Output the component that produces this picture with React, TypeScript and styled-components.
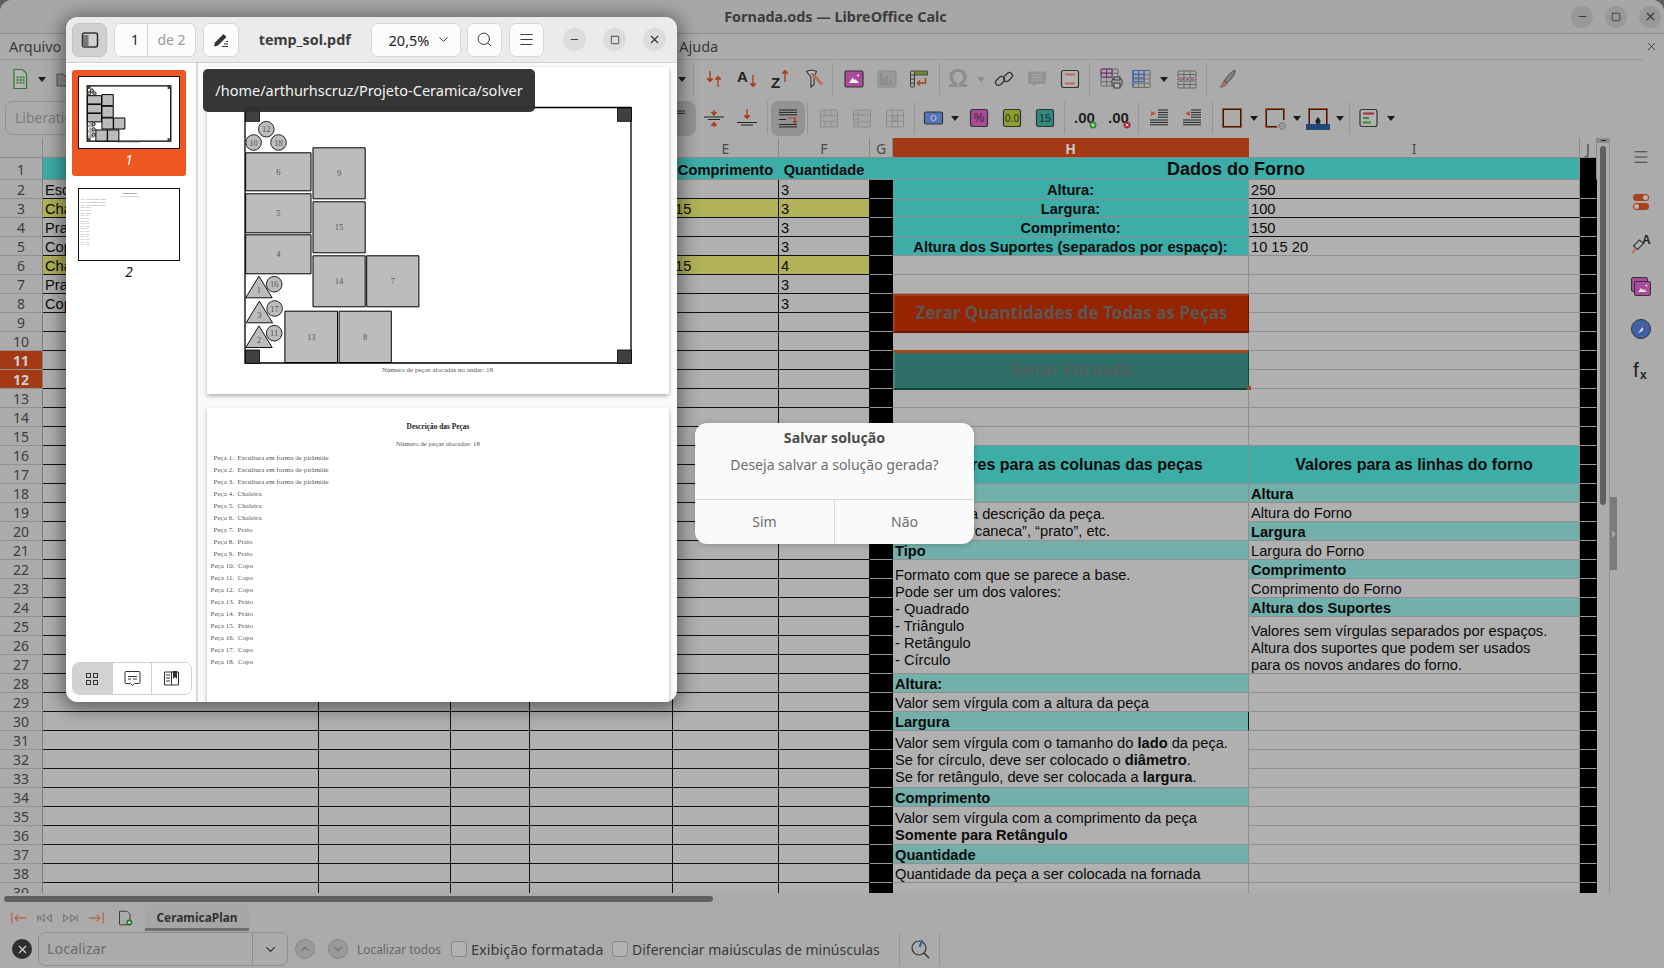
import React, { Fragment, ReactNode } from 'react';
import styled, { createGlobalStyle } from 'styled-components';
import { ChevronDown, ChevronUp, Menu, Minus, Search, Square, X } from 'lucide-react';

const UI_FONT = `'Noto Sans', 'Open Sans', sans-serif`;
const SHEET_FONT = `'Liberation Sans', Arial, sans-serif`;
const PDF_FONT = `'Liberation Serif', 'Times New Roman', serif`;

const GlobalStyle = createGlobalStyle`
  html, body { margin: 0; padding: 0; background: #5e5e5e; }
  * { box-sizing: border-box; }
  #root { width: 1664px; height: 968px; overflow: hidden; }
`;

const RED = '#a8401c';
const INK = '#333';
const OFF = '#8d8d8d';

/* ---------- main calc window ---------- */

const Screen = styled.div`
  position: relative;
  width: 1664px;
  height: 968px;
  overflow: hidden;
  background: #ababab;
  border-radius: 12px 12px 0 0;
  display: flex;
  flex-direction: column;
  font-family: ${UI_FONT};
  color: #3a3a3a;
`;

const TitleBar = styled.div`
  height: 34px;
  flex: none;
  background: #a7a7a7;
  border-bottom: 1px solid #8a8a8a;
  display: flex;
  align-items: center;
  padding: 0 3px 0 0;
`;

const TitleText = styled.div`
  flex: 1;
  padding-left: 100px;
  text-align: center;
  font-size: 14.4px;
  font-weight: 700;
  color: #3c3c3c;
`;

const CalcControls = styled.div`
  display: flex;
  gap: 12px;
`;

const RoundControl = styled.div<{ $size?: number; $tint?: string }>`
  width: ${p => p.$size ?? 22}px;
  height: ${p => p.$size ?? 22}px;
  border-radius: 50%;
  background: ${p => p.$tint ?? '#989898'};
  display: flex;
  align-items: center;
  justify-content: center;
  color: #333;
`;

const MenuBar = styled.div`
  height: 26px;
  flex: none;
  margin-right: 21px;
  border-bottom: 1px solid #969696;
  display: flex;
  align-items: center;
  padding-left: 9px;
  font-size: 14.4px;
  color: #3a3a3a;
`;

const MenuSpacer = styled.div`
  width: 618px;
`;

const MenuGrow = styled.div`
  flex: 1;
`;

const MenuClose = styled.div`
  margin-right: -15px;
  display: flex;
  color: #333;
`;

const ToolbarRow = styled.div<{ $h: number }>`
  height: ${p => p.$h}px;
  flex: none;
  display: flex;
  align-items: center;
`;

const Tool = styled.div<{ $w: number; $gap: number; $active?: boolean }>`
  width: ${p => p.$w}px;
  height: ${p => (p.$active ? 35 : 24)}px;
  margin-left: ${p => p.$gap}px;
  flex: none;
  display: flex;
  align-items: center;
  justify-content: center;
  border-radius: 8px;
  background: ${p => (p.$active ? '#939393' : 'transparent')};
`;

const Separator = styled.div<{ $gap: number }>`
  width: 1px;
  height: 32px;
  margin-left: ${p => p.$gap}px;
  flex: none;
  background: #959595;
`;

const DropMark = styled.div<{ $gap: number; $off?: boolean }>`
  width: 0;
  height: 0;
  margin-left: ${p => p.$gap}px;
  flex: none;
  border-left: 4.5px solid transparent;
  border-right: 4.5px solid transparent;
  border-top: 5px solid ${p => (p.$off ? OFF : '#1c1c1c')};
`;

const FontBox = styled.div`
  width: 210px;
  height: 34px;
  margin-left: 5px;
  flex: none;
  border: 1px solid #929292;
  border-radius: 7px;
  padding: 0 0 1px 9px;
  display: flex;
  align-items: center;
  font-size: 14px;
  color: #7c7c7c;
`;

const Icon = styled.svg.attrs({ viewBox: '0 0 20 20', fill: 'none' })`
  width: 20px;
  height: 20px;
  display: block;
  overflow: visible;
`;

const SheetArea = styled.div`
  flex: 1;
  min-height: 0;
  display: flex;
`;

const GridClip = styled.div`
  width: 1597px;
  flex: none;
  overflow: hidden;
`;

const SheetGrid = styled.div`
  display: grid;
  grid-template-columns: 43px 276px 132px 79px 143px 106px 91px 23px 356px 331px 17px;
  grid-template-rows: 20px 22px repeat(38, 19px);
  font-family: ${SHEET_FONT};
  font-size: 14.67px;
  color: #0b0b0b;
`;

const ColHead = styled.div<{ $on?: boolean }>`
  background: ${p => (p.$on ? '#a33a15' : '#ababab')};
  border-right: 1px solid ${p => (p.$on ? '#a33a15' : '#8a8a8a')};
  border-bottom: 1px solid #8a8a8a;
  padding-top: 2px;
  color: ${p => (p.$on ? '#c8c8c8' : '#4e4a46')};
  font-family: ${UI_FONT};
  font-size: 14px;
  font-weight: ${p => (p.$on ? 700 : 400)};
  display: flex;
  align-items: center;
  justify-content: center;
`;

const RowHead = styled.div<{ $on?: boolean }>`
  background: ${p => (p.$on ? '#a33a15' : '#ababab')};
  border-right: 1px solid #7d7d7d;
  border-bottom: 1px solid #919191;
  padding-top: 1px;
  color: ${p => (p.$on ? '#d0d0d0' : '#3d3d3d')};
  font-family: ${UI_FONT};
  font-size: 14px;
  font-weight: ${p => (p.$on ? 700 : 400)};
  display: flex;
  align-items: center;
  justify-content: center;
`;

type Tone = 'plain' | 'head' | 'sub' | 'yellow' | 'black';

const TONES: Record<Tone, string> = {
  plain: '#b0b0b0',
  head: '#3dada8',
  sub: '#73b0ab',
  yellow: '#b2b25a',
  black: '#000',
};

const Cell = styled.div<{
  $tone?: Tone;
  $span?: number;
  $cols?: number;
  $center?: boolean;
  $bold?: boolean;
  $size?: number;
  $bottom?: string;
  $right?: string;
  $end?: boolean;
  $top?: number;
}>`
  background: ${p => TONES[p.$tone ?? 'plain']};
  grid-row: span ${p => p.$span ?? 1};
  grid-column: span ${p => p.$cols ?? 1};
  border-bottom: 1px solid ${p => p.$bottom ?? '#8f8f8f'};
  border-right: 1px solid ${p => p.$right ?? '#8f8f8f'};
  padding: ${p => p.$top ?? 3}px 2px 0;
  font-weight: ${p => (p.$bold ? 700 : 400)};
  font-size: ${p => p.$size ?? 14.67}px;
  line-height: 17px;
  text-align: ${p => (p.$center ? 'center' : 'left')};
  display: flex;
  flex-direction: column;
  justify-content: ${p => (p.$end ? 'flex-end' : 'center')};
  white-space: nowrap;
  overflow: hidden;
`;

const SheetButton = styled.div<{ $kind: 'red' | 'teal' }>`
  grid-row: span 2;
  background: ${p => (p.$kind === 'red' ? '#962400' : '#2e7068')};
  border-style: solid;
  border-width: ${p => (p.$kind === 'red' ? '2px 1px 2px 2px' : '3px 1px 2px 2px')};
  border-color: ${p => (p.$kind === 'red'
    ? '#a33a18 #6c1200 #6c1200 #a33a18'
    : '#a8451c #0f453f #0f453f #3e8a80')};
  color: ${p => (p.$kind === 'red' ? '#5d5654' : '#50605f')};
  margin: ${p => (p.$kind === 'red' ? '0 0 -1px' : '-1px 0')};
  padding-bottom: 2px;
  font-family: ${UI_FONT};
  font-size: 17px;
  font-weight: 700;
  display: flex;
  align-items: center;
  justify-content: center;
  position: relative;
`;

const FillHandle = styled.span`
  position: absolute;
  right: -3px;
  bottom: -2px;
  width: 4px;
  height: 4px;
  background: #a8451c;
`;

const VScroll = styled.div`
  width: 12px;
  flex: none;
  display: flex;
  flex-direction: column;
  align-items: center;
`;

const VScrollCap = styled.div`
  width: 12px;
  height: 5px;
  background: #8c8c8c;
  display: flex;
  align-items: center;
  justify-content: center;
  &::after {
    content: '';
    width: 5px;
    height: 1px;
    background: #222;
  }
`;

const VScrollThumb = styled.div`
  width: 6px;
  height: 359px;
  margin-top: 3px;
  border-radius: 3px;
  background: #606060;
`;

const Deck = styled.div`
  flex: 1;
  display: flex;
  border-left: 1px solid #909090;
`;

const DeckGrip = styled.div`
  width: 7px;
  flex: none;
  height: 73px;
  margin-top: 359px;
  background: #7b7b7b;
  display: flex;
  align-items: center;
  justify-content: center;
  &::after {
    content: '';
    border-left: 4px solid #a6a6a6;
    border-top: 4px solid transparent;
    border-bottom: 4px solid transparent;
  }
`;

const DeckIcons = styled.div`
  flex: 1;
  display: flex;
  flex-direction: column;
  align-items: center;
  padding-top: 10px;
  gap: 22.4px;
`;

const DeckMenu = styled(Menu)`
  margin-bottom: 3.5px;
`;

const HScrollRow = styled.div`
  height: 12px;
  flex: none;
  padding: 3px 0 3px 4px;
`;

const HScrollThumb = styled.div`
  width: 709px;
  height: 6px;
  border-radius: 3px;
  background: #606060;
`;

const TabsRow = styled.div`
  height: 26px;
  flex: none;
  display: flex;
  align-items: center;
  gap: 9.5px;
  padding-left: 11px;
`;

const AddSheet = styled.div`
  margin-left: 5px;
  display: flex;
`;

const SheetTab = styled.div`
  width: 104px;
  height: 26px;
  margin-left: 2.5px;
  background: #a6a6a6;
  border-bottom: 3px solid #707070;
  display: flex;
  align-items: center;
  justify-content: center;
  font-size: 11.9px;
  font-weight: 700;
  color: #333;
`;

const FindBar = styled.div`
  height: 37px;
  flex: none;
  display: flex;
  align-items: center;
  padding: 0 0 1px 12px;
`;

const FindClose = styled(RoundControl)`
  color: #d8d8d8;
  margin-right: 6px;
`;

const FindInput = styled.div`
  width: 250px;
  height: 34px;
  border: 1px solid #8f8f8f;
  border-radius: 7px;
  display: flex;
  align-items: center;
`;

const FindText = styled.div`
  flex: 1;
  padding: 0 0 1px 8px;
  font-size: 14.4px;
  color: #6c6c6c;
`;

const FindDrop = styled.div`
  width: 35px;
  height: 100%;
  border-left: 1px solid #8f8f8f;
  display: flex;
  align-items: center;
  justify-content: center;
  color: #333;
`;

const FindArrow = styled.div<{ $gap: number }>`
  width: 20px;
  height: 20px;
  margin-left: ${p => p.$gap}px;
  border-radius: 50%;
  background: #9a9a9a;
  border: 1px solid #868686;
  display: flex;
  align-items: center;
  justify-content: center;
  color: #777;
`;

const FindAll = styled.div`
  margin-left: 9px;
  width: 84px;
  font-size: 11.9px;
  color: #666;
  white-space: nowrap;
`;

const CheckLabel = styled.div<{ $gap: number; $w: number; $size: number }>`
  margin-left: ${p => p.$gap}px;
  width: ${p => p.$w}px;
  flex: none;
  display: flex;
  align-items: center;
  gap: 4px;
  font-size: ${p => p.$size}px;
  color: #3a3a3a;
  white-space: nowrap;
`;

const CheckBox = styled.span`
  width: 16px;
  height: 16px;
  flex: none;
  border: 1px solid #8a8a8a;
  border-radius: 3px;
  background: #b2b2b2;
`;

const FindEnd = styled.div`
  width: 41px;
  height: 34px;
  margin-left: 9px;
  border-left: 1px solid #969696;
  border-right: 1px solid #969696;
  display: flex;
  align-items: center;
  justify-content: center;
`;

/* ---------- document viewer window ---------- */

const PdfWindow = styled.div`
  position: absolute;
  left: 66px;
  top: 17px;
  width: 611px;
  height: 685px;
  border-radius: 12px;
  overflow: hidden;
  background: #fafafa;
  box-shadow: 0 3px 18px 4px rgba(0, 0, 0, 0.45);
  display: flex;
  flex-direction: column;
  color: #2e2e2e;
`;

const PdfHeader = styled.div`
  height: 46px;
  flex: none;
  background: #ebebeb;
  border-bottom: 1px solid #d0d0d0;
  display: flex;
  align-items: center;
  padding: 0 11px 0 6px;
  gap: 7px;
`;

const HeadButton = styled.div<{ $w?: number; $on?: boolean }>`
  width: ${p => p.$w ?? 35}px;
  height: 34px;
  flex: none;
  border: 1px solid ${p => (p.$on ? '#c4c4c4' : '#d6d6d6')};
  border-radius: 7px;
  background: ${p => (p.$on ? '#d0d0d0' : '#fcfcfc')};
  display: flex;
  align-items: center;
  justify-content: center;
  color: #3a3a3a;
`;

const PageBox = styled.div`
  width: 82px;
  height: 34px;
  flex: none;
  border: 1px solid #d6d6d6;
  border-radius: 7px;
  background: #fcfcfc;
  display: flex;
  align-items: center;
  font-size: 14px;
`;

const PageCurrent = styled.div`
  width: 33px;
  height: 100%;
  padding-right: 8px;
  border-right: 1px solid #d6d6d6;
  display: flex;
  align-items: center;
  justify-content: flex-end;
  color: #222;
`;

const PageTotal = styled.div`
  flex: 1;
  text-align: center;
  color: #999;
`;

const PdfTitle = styled.div`
  flex: 1;
  text-align: center;
  font-size: 14.4px;
  font-weight: 700;
  color: #3d3d3d;
`;

const ZoomBox = styled(HeadButton)`
  padding-left: 9px;
  gap: 7px;
  font-size: 14.5px;
  color: #222;
  margin-right: -0.5px;
`;

const WindowControls = styled.div`
  margin-left: 12px;
  display: flex;
  gap: 17px;
`;

const PdfBody = styled.div`
  flex: 1;
  min-height: 0;
  display: flex;
`;

const Thumbs = styled.div`
  width: 132px;
  flex: none;
  background: #fff;
  border-right: 2px solid #dadada;
  padding: 7px 6px;
  display: flex;
  flex-direction: column;
`;

const ThumbCard = styled.div<{ $on?: boolean }>`
  width: 114px;
  height: 106px;
  flex: none;
  padding-top: 6px;
  margin-bottom: 6px;
  border-radius: 3px;
  background: ${p => (p.$on ? '#ed5722' : 'transparent')};
  display: flex;
  flex-direction: column;
  align-items: center;
`;

const ThumbFrame = styled.div`
  width: 102px;
  height: 73px;
  flex: none;
  background: #fff;
  border: 1px solid #111;
  overflow: hidden;
`;

const ThumbLabel = styled.div<{ $on?: boolean }>`
  margin-top: 2px;
  font-size: 13.5px;
  font-style: italic;
  color: ${p => (p.$on ? '#fff' : '#111')};
`;

const ThumbScale = styled.div`
  width: 462px;
  transform: scale(0.22);
  transform-origin: 0 0;
`;

const ModeSwitch = styled.div`
  margin-top: auto;
  width: 120px;
  height: 33px;
  flex: none;
  border: 1px solid #cfcfcf;
  border-radius: 7px;
  overflow: hidden;
  display: flex;
`;

const ModeItem = styled.div<{ $on?: boolean }>`
  flex: 1;
  background: ${p => (p.$on ? '#d2d2d2' : '#fff')};
  border-right: 1px solid #cfcfcf;
  display: flex;
  align-items: center;
  justify-content: center;
  color: #3a3a3a;
  &:last-child { border-right: 0; }
`;

const PageColumn = styled.div`
  flex: 1;
  min-width: 0;
  padding: 4px 0 0 9px;
  display: flex;
  flex-direction: column;
  gap: 14px;
  overflow: hidden;
`;

const PageSheet = styled.div<{ $h: number }>`
  width: 462px;
  height: ${p => p.$h}px;
  flex: none;
  background: #fff;
  box-shadow: 0 2px 4px rgba(0, 0, 0, 0.3);
`;

const PageDrawing = styled.svg.attrs({ viewBox: '207.5 66.5 462 327' })`
  width: 100%;
  height: 100%;
  display: block;
`;

const DocText = styled.div`
  padding-top: 14px;
  font-family: ${PDF_FONT};
  font-size: 6.9px;
  color: #555;
  display: flex;
  flex-direction: column;
`;

const DocTitle = styled.div`
  height: 18px;
  text-align: center;
  font-size: 7.4px;
  font-weight: 700;
  color: #222;
`;

const DocCount = styled.div`
  height: 12px;
  text-align: center;
`;

const DocLine = styled.div<{ $indent: number }>`
  height: 12px;
  line-height: 12px;
  padding-left: ${p => p.$indent}px;
  letter-spacing: 0.08px;
  white-space: pre;
`;

const PathTip = styled.div`
  position: absolute;
  left: 203px;
  top: 69px;
  width: 332px;
  height: 43px;
  padding-bottom: 1px;
  border-radius: 5px;
  background: rgba(48, 48, 48, 0.97);
  color: #f2f2f2;
  font-size: 14.5px;
  display: flex;
  align-items: center;
  justify-content: center;
`;

const SaveDialog = styled.div`
  position: absolute;
  left: 695px;
  top: 423px;
  width: 279px;
  height: 121px;
  border-radius: 12px;
  overflow: hidden;
  background: #fafafa;
  display: flex;
  flex-direction: column;
  box-shadow: 0 1px 6px rgba(0, 0, 0, 0.2);
`;

const DialogText = styled.div`
  height: 76px;
  flex: none;
  display: flex;
  flex-direction: column;
  align-items: center;
  padding-top: 4px;
`;

const DialogTitle = styled.div`
  font-size: 14.2px;
  font-weight: 700;
  color: #4b4b4b;
  line-height: 22px;
`;

const DialogBody = styled.div`
  margin-top: 5px;
  font-size: 14px;
  color: #6e6e6e;
  line-height: 22px;
`;

const DialogActions = styled.div`
  flex: 1;
  display: flex;
  border-top: 1px solid #d8d8d8;
`;

const DialogAction = styled.div<{ $w: number }>`
  width: ${p => p.$w}px;
  padding-bottom: 2px;
  border-right: 1px solid #d8d8d8;
  display: flex;
  align-items: center;
  justify-content: center;
  font-size: 14px;
  color: #6e6e6e;
  &:last-child { border-right: 0; }
`;

/* ---------- icons ---------- */

const ArrowV = ({ x, from, to, color = RED }: { x: number; from: number; to: number; color?: string }) => {
  const d = to > from ? -1 : 1;
  return (
    <>
      <path d={`M${x} ${from}V${to}`} stroke={color} strokeWidth="1.4" />
      <path d={`M${x - 2.8} ${to + d * 3.2}L${x} ${to}L${x + 2.8} ${to + d * 3.2}z`} fill={color} stroke={color} />
    </>
  );
};

const TableLines = ({ x, y, w, h, color, cols = 2, rows = 3 }: { x: number; y: number; w: number; h: number; color: string; cols?: number; rows?: number }) => (
  <g stroke={color} strokeWidth="1">
    <rect x={x} y={y} width={w} height={h} rx="1" />
    {Array.from({ length: cols - 1 }, (_, i) => (
      <path key={`c${i}`} d={`M${x + ((i + 1) * w) / cols} ${y}v${h}`} />
    ))}
    {Array.from({ length: rows - 1 }, (_, i) => (
      <path key={`r${i}`} d={`M${x} ${y + ((i + 1) * h) / rows}h${w}`} />
    ))}
  </g>
);

const Badge = ({ fill, label, size = 10 }: { fill: string; label: string; size?: number }) => (
  <Icon>
    <rect x="1.5" y="1.5" width="17" height="17" rx="2" fill={fill} stroke={INK} strokeWidth="1.2" />
    <text x="10" y="14" textAnchor="middle" fontSize={size} fontFamily={SHEET_FONT} fill="#2a2a2a">{label}</text>
  </Icon>
);

const TextRule = ({ y, x = 3, w = 14, n = 1 }: { y: number; x?: number; w?: number; n?: number }) => (
  <g stroke="#222" strokeWidth="1">
    {Array.from({ length: n }, (_, i) => (
      <path key={i} d={`M${x} ${y + i * 2.4}h${w}`} />
    ))}
  </g>
);

const icons: Record<string, ReactNode> = {
  calc: (
    <Icon>
      <path d="M4 .5h8.5l4 4v15H4z" stroke="#2d7a2a" strokeWidth="1.2" fill="#b4b4b4" />
      <rect x="6" y="7" width="9" height="8" fill="#2d7a2a" />
      <TableLines x={6} y={7} w={9} h={8} color="#b4b4b4" cols={3} rows={3} />
    </Icon>
  ),
  folder: (
    <Icon>
      <path d="M2 5h6l2 2h8v10H2z" stroke="#555" fill="#8e8e8e" />
    </Icon>
  ),
  sort: (
    <Icon>
      <ArrowV x={6} from={2} to={13} />
      <ArrowV x={14} from={18} to={7} />
    </Icon>
  ),
  sortUp: (
    <Icon>
      <text x="0" y="13" fontSize="15" fontWeight="700" fontFamily={SHEET_FONT} fill="#222">A</text>
      <ArrowV x={16} from={6} to={18} />
    </Icon>
  ),
  sortDown: (
    <Icon>
      <text x="1" y="19" fontSize="15" fontWeight="700" fontFamily={SHEET_FONT} fill="#222">Z</text>
      <ArrowV x={15} from={13} to={1} />
    </Icon>
  ),
  filter: (
    <Icon>
      <path d="M1.5 2.5c3-1.500 7-1.500 10 0l-2.500 5v8l-3 2.500V8z" stroke={INK} strokeWidth="1.100" fill="#b8b8b8" />
      <path d="M8 5.500l9 10" stroke="#c07058" strokeWidth="3" />
      <path d="M6.500 4.500l2 1.500" stroke={INK} />
    </Icon>
  ),
  image: (
    <Icon>
      <rect x="1" y="2" width="18" height="16" rx="1.500" fill="#a94a9a" stroke={INK} strokeWidth="1.200" />
      <path d="M5 14l3.500-5.500 2 2.500 1-1 3.500 4z" fill="#eee" />
      <circle cx="14" cy="6.500" r="1.100" fill="#eee" />
    </Icon>
  ),
  chart: (
    <Icon>
      <rect x="1" y="2" width="18" height="16" rx="1.500" fill="#9a9a9a" stroke="#8a8a8a" />
      <path d="M4 4v11h12M7 14V9M10 14V7M13 14v-4" stroke="#858585" strokeWidth="1.400" />
    </Icon>
  ),
  pivot: (
    <Icon>
      <TableLines x={1.500} y={2} w={4} h={16} color="#3a3a3a" cols={1} rows={4} />
      <rect x="5.500" y="2" width="13" height="4" fill="#6d8f2e" stroke="#3a3a3a" strokeWidth="0.800" />
      <path d="M16.500 9v5h-8M11 11.500l-2.600 2.500 2.600 2.500" stroke={RED} strokeWidth="1.400" />
    </Icon>
  ),
  omega: (
    <Icon>
      <text x="10" y="18" textAnchor="middle" fontSize="25" fontWeight="700" fontFamily={SHEET_FONT} fill={OFF}>Ω</text>
    </Icon>
  ),
  link: (
    <Icon>
      <g stroke={INK} strokeWidth="1.200">
        <rect x="1" y="9" width="10" height="6" rx="3" transform="rotate(-45 6 12)" />
        <rect x="9" y="5" width="10" height="6" rx="3" transform="rotate(-45 14 8)" />
      </g>
    </Icon>
  ),
  comment: (
    <Icon>
      <path d="M2 2.500h16a1 1 0 011 1V14a1 1 0 01-1 1H9l-3 3v-3H2a1 1 0 01-1-1V3.500a1 1 0 011-1z" fill="#939393" />
      <path d="M5 6h10M5 8.500h10M5 11h10" stroke="#a9a9a9" />
    </Icon>
  ),
  headers: (
    <Icon>
      <rect x="1.500" y="1.500" width="17" height="17" rx="2" fill="#b2b2b2" stroke={INK} strokeWidth="1.200" />
      <path d="M5 5.500h10M5 14.500h10" stroke="#c5694a" strokeWidth="2" />
    </Icon>
  ),
  protect: (
    <Icon>
      <TableLines x={0} y={0} w={17} h={17} color="#6b6b6b" cols={3} rows={4} />
      <TableLines x={0} y={0} w={11} h={8} color="#7a2a78" cols={2} rows={2} />
      <rect x="11" y="10" width="10" height="7" rx="1.500" fill="#aaa" stroke={INK} />
      <rect x="13" y="8" width="6" height="3" fill="#aaa" stroke={INK} />
      <rect x="13" y="14" width="6" height="5" fill="#b6b6b6" stroke={INK} />
    </Icon>
  ),
  table: (
    <Icon>
      <rect x="1" y="1.500" width="17" height="17" fill="#a7a7a7" />
      <TableLines x={1} y={1.500} w={17} h={17} color="#6e6e6e" cols={3} rows={4} />
      <TableLines x={1} y={1.500} w={11} h={11} color="#3c64b5" cols={2} rows={3} />
      <path d="M1 18.500V1.500h17" stroke="#3c64b5" strokeWidth="1.200" />
    </Icon>
  ),
  rowBreak: (
    <Icon>
      <TableLines x={1} y={2} w={18} h={7} color="#666" cols={3} rows={2} />
      <TableLines x={1} y={12} w={18} h={7} color="#666" cols={3} rows={2} />
      <path d="M0 10.500h20" stroke="#a8498f" strokeDasharray="3 1.500" />
    </Icon>
  ),
  brush: (
    <Icon>
      <path d="M6 12c3-5 7-9 11-11 1 3-3 9-8 13z" fill="#808080" stroke="#444" strokeWidth="0.800" />
      <path d="M6 12l3 2c-1 3-4 4-7 4 2-1 2-4 4-6z" fill="#c07058" stroke="#444" strokeWidth="0.600" />
    </Icon>
  ),
  alignTop: (
    <Icon>
      <TextRule y={3} n={2} x={0} w={16} />
      <ArrowV x={4} from={19} to={8} />
    </Icon>
  ),
  alignMiddle: (
    <Icon>
      <ArrowV x={10} from={2} to={7.500} />
      <TextRule y={9} x={0} w={20} />
      <TextRule y={11.500} x={4} w={12} />
      <ArrowV x={10} from={19} to={14} />
    </Icon>
  ),
  alignBottom: (
    <Icon>
      <ArrowV x={10} from={1} to={11} />
      <TextRule y={14.500} x={0} w={20} />
      <TextRule y={17} x={4} w={12} />
    </Icon>
  ),
  wrap: (
    <Icon>
      <TextRule y={2} n={3} x={1} w={18} />
      <path d="M10 10h7v4" stroke={RED} strokeWidth="1.200" />
      <path d="M14.500 13h5L17 16z" fill={RED} />
      <TextRule y={11.500} x={1} w={7} />
      <TextRule y={16.500} n={2} x={1} w={18} />
    </Icon>
  ),
  merge: (
    <Icon>
      <rect x="1.500" y="2" width="17" height="17" rx="1" fill="#a6a6a6" />
      <TableLines x={1.500} y={2} w={17} h={17} color={OFF} cols={1} rows={3} />
      <path d="M6 2v5M6 13v6M12 2v5M12 13v6" stroke={OFF} />
    </Icon>
  ),
  mergeSplit: (
    <Icon>
      <rect x="1.500" y="2" width="17" height="17" rx="1" fill="#a6a6a6" />
      <TableLines x={1.500} y={2} w={17} h={17} color={OFF} cols={1} rows={1} />
      <path d="M6 2v17M1.500 6.500h4.500M1.500 11h4.500M1.500 15h4.500M6 7h12.500M6 14h12.500" stroke={OFF} />
    </Icon>
  ),
  mergeCenter: (
    <Icon>
      <TableLines x={1.500} y={2} w={17} h={17} color={OFF} cols={3} rows={3} />
      <rect x="7.500" y="8" width="5" height="5" fill="#a3a3a3" stroke={OFF} />
    </Icon>
  ),
  currency: (
    <Icon>
      <rect x="0.500" y="4" width="18" height="12" rx="1.500" fill="#5674b8" stroke={INK} strokeWidth="1.200" />
      <circle cx="9.500" cy="10" r="2.600" stroke="#b9c6e3" />
    </Icon>
  ),
  percent: <Badge fill="#a94a9a" label="%" size={12} />,
  number: <Badge fill="#8aa02e" label="0.0" size={10} />,
  date: <Badge fill="#2f8a80" label="15" size={11} />,
  addDec: (
    <Icon>
      <text x="-2" y="15" fontSize="15" fontWeight="700" fontFamily={SHEET_FONT} fill="#222">.00</text>
      <circle cx="17" cy="17" r="3.500" fill="#2f8a2c" />
      <path d="M15 17h4M17 15v4" stroke="#ddd" />
    </Icon>
  ),
  delDec: (
    <Icon>
      <text x="-2" y="15" fontSize="15" fontWeight="700" fontFamily={SHEET_FONT} fill="#222">.00</text>
      <circle cx="17" cy="17" r="3.500" fill="#a62a3a" />
      <path d="M15.500 15.500l3 3M18.500 15.500l-3 3" stroke="#ddd" />
    </Icon>
  ),
  indent: (
    <Icon>
      <path d="M1 3l5 2.500L1 8z" fill="#c2522a" />
      <TextRule y={2} n={4} x={8} w={10} />
      <TextRule y={12} n={3} x={0} w={18} />
    </Icon>
  ),
  outdent: (
    <Icon>
      <path d="M7 3L2 5.500 7 8z" fill="#c2522a" />
      <TextRule y={2} n={4} x={8} w={10} />
      <TextRule y={12} n={3} x={0} w={18} />
    </Icon>
  ),
  border: (
    <Icon>
      <rect x="0.500" y="0.500" width="19" height="19" stroke="#b0431a" strokeWidth="1" />
      <rect x="1.500" y="1.500" width="17" height="17" stroke="#222" strokeWidth="1" />
    </Icon>
  ),
  borderStyle: (
    <Icon>
      <path d="M12 19.500H.500V.500h19V12" stroke="#b0431a" />
      <path d="M12 18.500H1.500V1.500h17V12" stroke="#222" />
      <circle cx="17" cy="18" r="3" stroke="#7a7a7a" strokeWidth="2" strokeDasharray="1.500 0.800" />
      <circle cx="17" cy="18" r="1" fill="#7a7a7a" />
    </Icon>
  ),
  borderColor: (
    <Icon>
      <rect x="0.500" y="0.500" width="19" height="17" stroke="#b0431a" />
      <rect x="1.500" y="1.500" width="17" height="15" stroke="#222" />
      <path d="M10 9c1.500 2 2.500 3 2.500 4.500a2.500 2.500 0 01-5 0C7.500 12 8.500 11 10 9z" fill="#222" />
      <rect x="-2" y="16" width="24" height="6" fill="#1e4a78" />
    </Icon>
  ),
  conditional: (
    <Icon>
      <rect x="1" y="1.500" width="17" height="17" rx="2" stroke={INK} strokeWidth="1.200" fill="#b2b2b2" />
      <path d="M4 5.500h11" stroke="#a62a3a" strokeWidth="2" />
      <path d="M4 10h6M4 14.500h8" stroke="#3d8a2c" strokeWidth="2" />
    </Icon>
  ),
};

type ToolItem = [string, number];

const rowOne: ToolItem[] = [
  ['calc', 20], ['drop', 42.6], ['folder', 66],
  ['drop', 684], ['sep', 695.5], ['sort', 716], ['sortUp', 749], ['sortDown', 782], ['filter', 817],
  ['sep', 835], ['image', 856], ['chart', 889], ['pivot', 921], ['sep', 942], ['omega', 960],
  ['dropOff', 983.7], ['link', 1007], ['comment', 1040], ['headers', 1073], ['sep', 1093],
  ['protect', 1114], ['table', 1145], ['drop', 1167.7], ['rowBreak', 1190.7], ['sep', 1211], ['brush', 1232],
];

const rowTwo: ToolItem[] = [
  ['alignTop', 679], ['alignMiddle', 714], ['alignBottom', 747], ['sep', 767.3], ['wrap', 788], ['sep', 808],
  ['merge', 829], ['mergeSplit', 862], ['mergeCenter', 895], ['sep', 915], ['currency', 933.7], ['drop', 956],
  ['percent', 980], ['number', 1013], ['date', 1046], ['sep', 1066], ['addDec', 1087], ['delDec', 1120.7],
  ['sep', 1140], ['indent', 1161], ['outdent', 1194], ['sep', 1214], ['border', 1233], ['drop', 1255.7],
  ['borderStyle', 1277], ['drop', 1299.7], ['borderColor', 1321], ['drop', 1343.7], ['sep', 1354],
  ['conditional', 1373], ['drop', 1395.7],
];

const toolWidth = (kind: string) => {
  if (kind === 'sep') return 1;
  if (kind === 'drop' || kind === 'dropOff') return 9;
  if (kind === 'alignTop' || kind === 'wrap') return 34;
  return 24;
};

const renderTools = (items: ToolItem[], start = 0) => {
  let edge = start;
  return items.map(([kind, center], i) => {
    const w = toolWidth(kind);
    const gap = center - w / 2 - edge;
    edge = center + w / 2;
    if (kind === 'sep') return <Separator key={i} $gap={gap} />;
    if (kind === 'drop' || kind === 'dropOff') return <DropMark key={i} $gap={gap} $off={kind === 'dropOff'} />;
    return (
      <Tool key={i} $w={w} $gap={gap} $active={kind === 'alignTop' || kind === 'wrap'}>
        {icons[kind]}
      </Tool>
    );
  });
};

/* ---------- sheet data ---------- */

const COLUMNS = ['A', 'B', 'C', 'D', 'E', 'F', 'G', 'H', 'I', 'J'];
const ROWS = Array.from({ length: 38 }, (_, i) => i + 2);

const pieces: Record<number, { name: string; len?: string; qty: string; mark?: boolean }> = {
  2: { name: 'Escultura em forma de pirâmide', qty: '3' },
  3: { name: 'Chaleira', len: '15', qty: '3', mark: true },
  4: { name: 'Prato', qty: '3' },
  5: { name: 'Copo', qty: '3' },
  6: { name: 'Chaleira', len: '15', qty: '4', mark: true },
  7: { name: 'Prato', qty: '3' },
  8: { name: 'Copo', qty: '3' },
};

type CellDef = {
  tone?: Tone;
  span?: number;
  center?: boolean;
  bold?: boolean;
  size?: number;
  bottom?: string;
  right?: string;
  top?: number;
  button?: 'red' | 'teal';
  body?: ReactNode;
};

const colH: Record<number, CellDef> = {
  2: { tone: 'head', center: true, bold: true, body: 'Altura:' },
  3: { tone: 'head', center: true, bold: true, body: 'Largura:' },
  4: { tone: 'head', center: true, bold: true, body: 'Comprimento:' },
  5: { tone: 'head', center: true, bold: true, body: 'Altura dos Suportes (separados por espaço):' },
  8: { span: 2, button: 'red', body: 'Zerar Quantidades de Todas as Peças' },
  11: { span: 2, button: 'teal', body: 'Gerar Fornada' },
  16: { span: 2, tone: 'head', center: true, bold: true, size: 16, top: 0, body: 'Valores para as colunas das peças' },
  18: { tone: 'sub', bold: true, body: 'Nome' },
  19: {
    span: 2,
    body: (
      <>
        <div>Nome com a descrição da peça.</div>
        <div>Ex: “copo”, “caneca”, “prato”, etc.</div>
      </>
    ),
  },
  21: { tone: 'sub', bold: true, body: 'Tipo' },
  22: {
    span: 6,
    body: (
      <>
        <div>Formato com que se parece a base.</div>
        <div>Pode ser um dos valores:</div>
        <div>- Quadrado</div>
        <div>- Triângulo</div>
        <div>- Retângulo</div>
        <div>- Círculo</div>
      </>
    ),
  },
  28: { tone: 'sub', bold: true, body: 'Altura:' },
  29: { body: 'Valor sem vírgula com a altura da peça' },
  30: { tone: 'sub', bold: true, right: '#111', body: 'Largura' },
  31: {
    span: 3,
    body: (
      <>
        <div>Valor sem vírgula com o tamanho do <b>lado</b> da peça.</div>
        <div>Se for círculo, deve ser colocado o <b>diâmetro</b>.</div>
        <div>Se for retângulo, deve ser colocada a <b>largura</b>.</div>
      </>
    ),
  },
  34: { tone: 'sub', bold: true, body: 'Comprimento' },
  35: {
    span: 2,
    body: (
      <>
        <div>Valor sem vírgula com a comprimento da peça</div>
        <div><b>Somente para Retângulo</b></div>
      </>
    ),
  },
  37: { tone: 'sub', bold: true, body: 'Quantidade' },
  38: { body: 'Quantidade da peça a ser colocada na fornada' },
};

const colI: Record<number, CellDef> = {
  2: { bottom: '#111', body: '250' },
  3: { bottom: '#111', body: '100' },
  4: { bottom: '#111', body: '150' },
  5: { body: '10 15 20' },
  16: { span: 2, tone: 'head', center: true, bold: true, size: 16, top: 0, body: 'Valores para as linhas do forno' },
  18: { tone: 'sub', bold: true, body: 'Altura' },
  19: { body: 'Altura do Forno' },
  20: { tone: 'sub', bold: true, body: 'Largura' },
  21: { body: 'Largura do Forno' },
  22: { tone: 'sub', bold: true, body: 'Comprimento' },
  23: { body: 'Comprimento do Forno' },
  24: { tone: 'sub', bold: true, body: 'Altura dos Suportes' },
  25: {
    span: 3,
    top: 6,
    body: (
      <>
        <div>Valores sem vírgulas separados por espaços.</div>
        <div>Altura dos suportes que podem ser usados</div>
        <div>para os novos andares do forno.</div>
      </>
    ),
  },
};

const isCovered = (col: Record<number, CellDef>, row: number) =>
  Object.entries(col).some(([start, def]) => {
    const from = Number(start);
    return row > from && row < from + (def.span ?? 1);
  });

const renderMerged = (col: Record<number, CellDef>, row: number, name: string) => {
  if (isCovered(col, row)) return null;
  const def = col[row];
  if (def?.button) {
    return (
      <SheetButton key={name} $kind={def.button}>
        {def.body}
        {def.button === 'teal' && <FillHandle />}
      </SheetButton>
    );
  }
  return (
    <Cell
      key={name}
      $tone={def?.tone}
      $span={def?.span}
      $center={def?.center}
      $bold={def?.bold}
      $size={def?.size}
      $bottom={def?.bottom}
      $right={def?.right}
      $top={def?.top}
    >
      {def?.body}
    </Cell>
  );
};

/* ---------- pdf pages ---------- */

const SQUARES: [number, number][] = [[246, 107.5], [618, 107.5], [246, 349.5], [618, 349.5]];

const BOXES: [string, number, number, number, number][] = [
  ['6', 246.2, 152.3, 65.3, 38],
  ['5', 246.2, 193.3, 65.3, 39],
  ['4', 246.2, 234.3, 65.3, 39],
  ['9', 313.5, 147.3, 52.2, 51],
  ['15', 313.5, 201.3, 52.2, 51],
  ['14', 313.5, 255.3, 52.2, 51],
  ['7', 367.2, 255.3, 52.2, 51],
  ['13', 285.4, 310.7, 52.6, 51.3],
  ['8', 339.6, 310.7, 52.2, 51.3],
];

const DISCS: [string, number, number][] = [
  ['12', 266.8, 128.7], ['10', 254.1, 142], ['18', 279, 142],
  ['16', 274.7, 283.7], ['17', 275.1, 308], ['11', 274.7, 332.7],
];

const CONES: [string, number, number][] = [['1', 246.2, 297.3], ['3', 246.6, 322.3], ['2', 246.2, 347]];

const pieceLabel = { fontFamily: PDF_FONT, fontSize: 8.5, fill: '#555', textAnchor: 'middle' as const };

const KilnDrawing = () => (
  <PageDrawing>
    <text x="438" y="371" {...pieceLabel} fontSize="7">Número de peças alocadas no andar: 18</text>
    <rect x="245.5" y="107" width="386" height="255.500" fill="#fff" stroke="#000" strokeWidth="1.300" vectorEffect="non-scaling-stroke" />
    {SQUARES.map(([x, y]) => (
      <rect key={`${x}-${y}`} x={x} y={y} width="14" height="13.300" fill="#404040" stroke="#000" strokeWidth="0.800" />
    ))}
    {BOXES.map(([label, x, y, w, h]) => (
      <g key={label}>
        <rect x={x} y={y} width={w} height={h} fill="#bcbcbc" stroke="#000" strokeWidth="1" vectorEffect="non-scaling-stroke" />
        <text x={x + w / 2} y={y + h / 2 + 3} {...pieceLabel}>{label}</text>
      </g>
    ))}
    {DISCS.map(([label, cx, cy]) => (
      <g key={label}>
        <circle cx={cx} cy={cy} r="7.800" fill="#bcbcbc" stroke="#222" strokeWidth="1" vectorEffect="non-scaling-stroke" />
        <text x={cx} y={cy + 3} {...pieceLabel}>{label}</text>
      </g>
    ))}
    {CONES.map(([label, x, y]) => (
      <g key={label}>
        <path d={`M${x} ${y}h26.500l-13.250 -21.600z`} fill="#bcbcbc" stroke="#111" strokeWidth="1" />
        <text x={x + 13.200} y={y - 5} {...pieceLabel}>{label}</text>
      </g>
    ))}
  </PageDrawing>
);

const pieceNames = [
  'Escultura em forma de pirâmide', 'Escultura em forma de pirâmide', 'Escultura em forma de pirâmide',
  'Chaleira', 'Chaleira', 'Chaleira', 'Prato', 'Prato', 'Prato', 'Copo', 'Copo', 'Copo',
  'Prato', 'Prato', 'Prato', 'Copo', 'Copo', 'Copo',
];

const PieceList = () => (
  <DocText>
    <DocTitle>Descrição das Peças</DocTitle>
    <DocCount>Número de peças alocadas: 18</DocCount>
    {pieceNames.map((name, i) => (
      <DocLine key={i} $indent={i < 9 ? 6.5 : 3.5}>{`Peça ${i + 1}.  ${name}`}</DocLine>
    ))}
  </DocText>
);

/* ---------- page ---------- */

const deckIcons = (
  <>
    <DeckMenu size={18} strokeWidth={1.2} color={INK} />
    <Icon>
      <rect x="2" y="2" width="16" height="7" rx="3.500" fill="#a8401c" />
      <circle cx="14.500" cy="5.500" r="2.500" fill="#b2b2b2" />
      <rect x="2" y="11" width="16" height="7" rx="3.500" fill="#a8401c" />
      <circle cx="5.500" cy="14.500" r="2.500" fill="#b2b2b2" />
    </Icon>
    <Icon>
      <text x="11" y="10" fontSize="12" fontWeight="700" fontFamily={SHEET_FONT} fill="#222">A</text>
      <path d="M2.500 12l6-6 4 3.500-6 6z" stroke={INK} strokeWidth="1.100" fill="#b2b2b2" />
      <path d="M5 15l-4 4" stroke="#c07058" strokeWidth="2" />
    </Icon>
    <Icon>
      <rect x="0.500" y="0.500" width="16" height="14" rx="1.500" fill="#a94a9a" stroke={INK} />
      <rect x="3.500" y="4.500" width="16" height="14" rx="1.500" fill="#a94a9a" stroke={INK} />
      <path d="M7 15l3-4 2 2 1-1 3 3z" fill="#ddd" />
      <circle cx="15.500" cy="8.500" r="1" fill="#ddd" />
    </Icon>
    <Icon>
      <circle cx="10" cy="10" r="9.500" fill="#4060a8" stroke={INK} />
      <path d="M7 14l6-8-1.500 6z" fill="#ddd" />
      <path d="M11 9l3-3.500-1 3.500z" fill="#a62a3a" />
    </Icon>
    <Icon>
      <text x="2" y="16" fontSize="21" fontFamily={SHEET_FONT} fill="#222">f</text>
      <text x="9" y="18" fontSize="12" fontWeight="700" fontFamily={SHEET_FONT} fill="#222">x</text>
    </Icon>
  </>
);

const MiniIcon = styled(Icon)`
  width: 16px;
  height: 16px;
`;

const AddSheetIcon = styled(Icon)`
  width: 15px;
  height: 16px;
`;

const MiniArrow = ({ d, color }: { d: string; color: string }) => (
  <MiniIcon>
    <path d={d} stroke={color} strokeWidth="1.600" />
  </MiniIcon>
);

const App: React.FC = () => {
  return (
    <>
      <GlobalStyle />
      <Screen>
        <TitleBar>
          <TitleText>Fornada.ods — LibreOffice Calc</TitleText>
          <CalcControls>
            <RoundControl><Minus size={11} /></RoundControl>
            <RoundControl><Square size={10} /></RoundControl>
            <RoundControl><X size={13} /></RoundControl>
          </CalcControls>
        </TitleBar>

        <MenuBar>
          <span>Arquivo</span>
          <MenuSpacer />
          <span>Ajuda</span>
          <MenuGrow />
          <MenuClose><X size={13} strokeWidth={1.6} /></MenuClose>
        </MenuBar>

        <ToolbarRow $h={38}>{renderTools(rowOne)}</ToolbarRow>
        <ToolbarRow $h={40}>
          <FontBox>Liberation Sans</FontBox>
          {renderTools(rowTwo, 215)}
        </ToolbarRow>

        <SheetArea>
          <GridClip>
            <SheetGrid>
              <ColHead />
              {COLUMNS.map(col => (
                <ColHead key={col} $on={col === 'H'}>{col}</ColHead>
              ))}

              <RowHead>1</RowHead>
              {['', '', '', '', 'Comprimento', 'Quantidade', ''].map((label, i) => (
                <Cell key={i} $tone="head" $center $bold $end $right="#3dada8">{label}</Cell>
              ))}
              <Cell $tone="head" $cols={2} $center $bold $size={18} $top={1}>Dados do Forno</Cell>
              <Cell $tone="black" $bottom="#000" />

              {ROWS.map(row => {
                const piece = pieces[row];
                const tone: Tone = piece?.mark ? 'yellow' : 'plain';
                return (
                  <Fragment key={row}>
                    <RowHead $on={row === 11 || row === 12}>{row}</RowHead>
                    <Cell $tone={tone} $bottom="#111" $right="#111">{piece?.name}</Cell>
                    <Cell $tone={tone} $bottom="#111" $right="#111" />
                    <Cell $tone={tone} $bottom="#111" $right="#111" />
                    <Cell $tone={tone} $bottom="#111" $right="#111" />
                    <Cell $tone={tone} $bottom="#111" $right="#111">{piece?.len}</Cell>
                    <Cell $tone={tone} $bottom="#111" $right="#111">{piece?.qty}</Cell>
                    <Cell $tone="black" $bottom="#989898" $right="#000" />
                    {renderMerged(colH, row, 'h')}
                    {renderMerged(colI, row, 'i')}
                    <Cell $tone="black" $bottom="#989898" $right="#000" />
                  </Fragment>
                );
              })}
            </SheetGrid>
          </GridClip>

          <VScroll>
            <VScrollCap />
            <VScrollThumb />
          </VScroll>

          <Deck>
            <DeckGrip />
            <DeckIcons>{deckIcons}</DeckIcons>
          </Deck>
        </SheetArea>

        <HScrollRow><HScrollThumb /></HScrollRow>

        <TabsRow>
          <MiniArrow d="M1 3v14M19 10H5M9 6l-4 4 4 4" color="#b36a4a" />
          <MiniArrow d="M1 6v8M9 6l-6 4 6 4zM18 6l-6 4 6 4z" color="#7d7d7d" />
          <MiniArrow d="M19 6v8M11 6l6 4-6 4zM2 6l6 4-6 4z" color="#7d7d7d" />
          <MiniArrow d="M19 3v14M1 10h14M11 6l4 4-4 4" color="#b36a4a" />
          <AddSheet>
            <AddSheetIcon>
              <path d="M2 1h10l4 4v13a1 1 0 01-1 1H3a1 1 0 01-1-1z" stroke={INK} strokeWidth="1.200" />
              <circle cx="15" cy="16" r="4" fill="#1f7a2a" />
              <path d="M13 16h4M15 14v4" stroke="#e8e8e8" strokeWidth="1.200" />
            </AddSheetIcon>
          </AddSheet>
          <SheetTab>CeramicaPlan</SheetTab>
        </TabsRow>

        <FindBar>
          <FindClose $size={20} $tint="#2f2f2f"><X size={13} /></FindClose>
          <FindInput>
            <FindText>Localizar</FindText>
            <FindDrop><ChevronDown size={15} /></FindDrop>
          </FindInput>
          <FindArrow $gap={7}><ChevronUp size={14} /></FindArrow>
          <FindArrow $gap={13}><ChevronDown size={14} /></FindArrow>
          <FindAll>Localizar todos</FindAll>
          <CheckLabel $gap={10} $w={161} $size={14.6}><CheckBox />Exibição formatada</CheckLabel>
          <CheckLabel $gap={0} $w={278} $size={14}><CheckBox />Diferenciar maiúsculas de minúsculas</CheckLabel>
          <FindEnd>
            <Icon>
              <circle cx="9" cy="9" r="7" stroke={INK} strokeWidth="1.200" />
              <path d="M14 14l5 5" stroke={INK} strokeWidth="1.400" />
              <path d="M12.500 1l-3 7" stroke="#2f5fb0" strokeWidth="2" />
            </Icon>
          </FindEnd>
        </FindBar>

        <PdfWindow>
          <PdfHeader>
            <HeadButton $on>
              <svg width="18" height="18" viewBox="0 0 18 18" fill="none">
                <rect x="1.500" y="2" width="15" height="14" rx="2" stroke={INK} strokeWidth="1.600" />
                <path d="M2 4h5.500v11.500H2z" fill="#777" />
              </svg>
            </HeadButton>
            <PageBox>
              <PageCurrent>1</PageCurrent>
              <PageTotal>de 2</PageTotal>
            </PageBox>
            <HeadButton $w={36}>
              <svg width="18" height="18" viewBox="0 0 18 18" fill="none">
                <path d="M2 15.500l1-4L11.500 3l3 3L6 14.500z" fill={INK} />
                <path d="M10 15.500h6M12 13h4M14 10.500h2" stroke={INK} />
              </svg>
            </HeadButton>
            <PdfTitle>temp_sol.pdf</PdfTitle>
            <ZoomBox $w={90}>20,5%<ChevronDown size={15} strokeWidth={1.4} /></ZoomBox>
            <HeadButton><Search size={17} strokeWidth={1.4} /></HeadButton>
            <HeadButton><Menu size={17} strokeWidth={1.4} /></HeadButton>
            <WindowControls>
              <RoundControl $size={23} $tint="#dcdcdc"><Minus size={11} /></RoundControl>
              <RoundControl $size={23} $tint="#dcdcdc"><Square size={10} /></RoundControl>
              <RoundControl $size={23} $tint="#dcdcdc"><X size={13} /></RoundControl>
            </WindowControls>
          </PdfHeader>

          <PdfBody>
            <Thumbs>
              <ThumbCard $on>
                <ThumbFrame><KilnDrawing /></ThumbFrame>
                <ThumbLabel $on>1</ThumbLabel>
              </ThumbCard>
              <ThumbCard>
                <ThumbFrame>
                  <ThumbScale aria-hidden><PieceList /></ThumbScale>
                </ThumbFrame>
                <ThumbLabel>2</ThumbLabel>
              </ThumbCard>
              <ModeSwitch>
                <ModeItem $on>
                  <svg width="16" height="16" viewBox="0 0 16 16" fill="none" stroke={INK}>
                    <rect x="2.500" y="2.500" width="4" height="4" />
                    <rect x="9.500" y="2.500" width="4" height="4" />
                    <rect x="2.500" y="9.500" width="4" height="4" />
                    <rect x="9.500" y="9.500" width="4" height="4" />
                  </svg>
                </ModeItem>
                <ModeItem>
                  <svg width="17" height="17" viewBox="0 0 17 17" fill="none">
                    <path d="M2 1.500h13a1 1 0 011 1v10a1 1 0 01-1 1h-4.500l-2 2-2-2H2a1 1 0 01-1-1v-10a1 1 0 011-1z" stroke={INK} />
                    <path d="M4 6.500h9M4 9h3M9 9h4" stroke={INK} />
                  </svg>
                </ModeItem>
                <ModeItem>
                  <svg width="17" height="17" viewBox="0 0 17 17" fill="none">
                    <path d="M1.500 2h14v13h-14zM8.500 2v13" stroke={INK} />
                    <path d="M3 5h4M3 8h4M3 11h4" stroke={INK} />
                    <path d="M10 1h4v8l-2-2-2 2z" fill={INK} />
                  </svg>
                </ModeItem>
              </ModeSwitch>
            </Thumbs>

            <PageColumn>
              <PageSheet $h={327}><KilnDrawing /></PageSheet>
              <PageSheet $h={320}><PieceList /></PageSheet>
            </PageColumn>
          </PdfBody>
        </PdfWindow>

        <PathTip>/home/arthurhscruz/Projeto-Ceramica/solver</PathTip>

        <SaveDialog>
          <DialogText>
            <DialogTitle>Salvar solução</DialogTitle>
            <DialogBody>Deseja salvar a solução gerada?</DialogBody>
          </DialogText>
          <DialogActions>
            <DialogAction $w={140}>Sim</DialogAction>
            <DialogAction $w={139}>Não</DialogAction>
          </DialogActions>
        </SaveDialog>
      </Screen>
    </>
  );
};

export default App;
